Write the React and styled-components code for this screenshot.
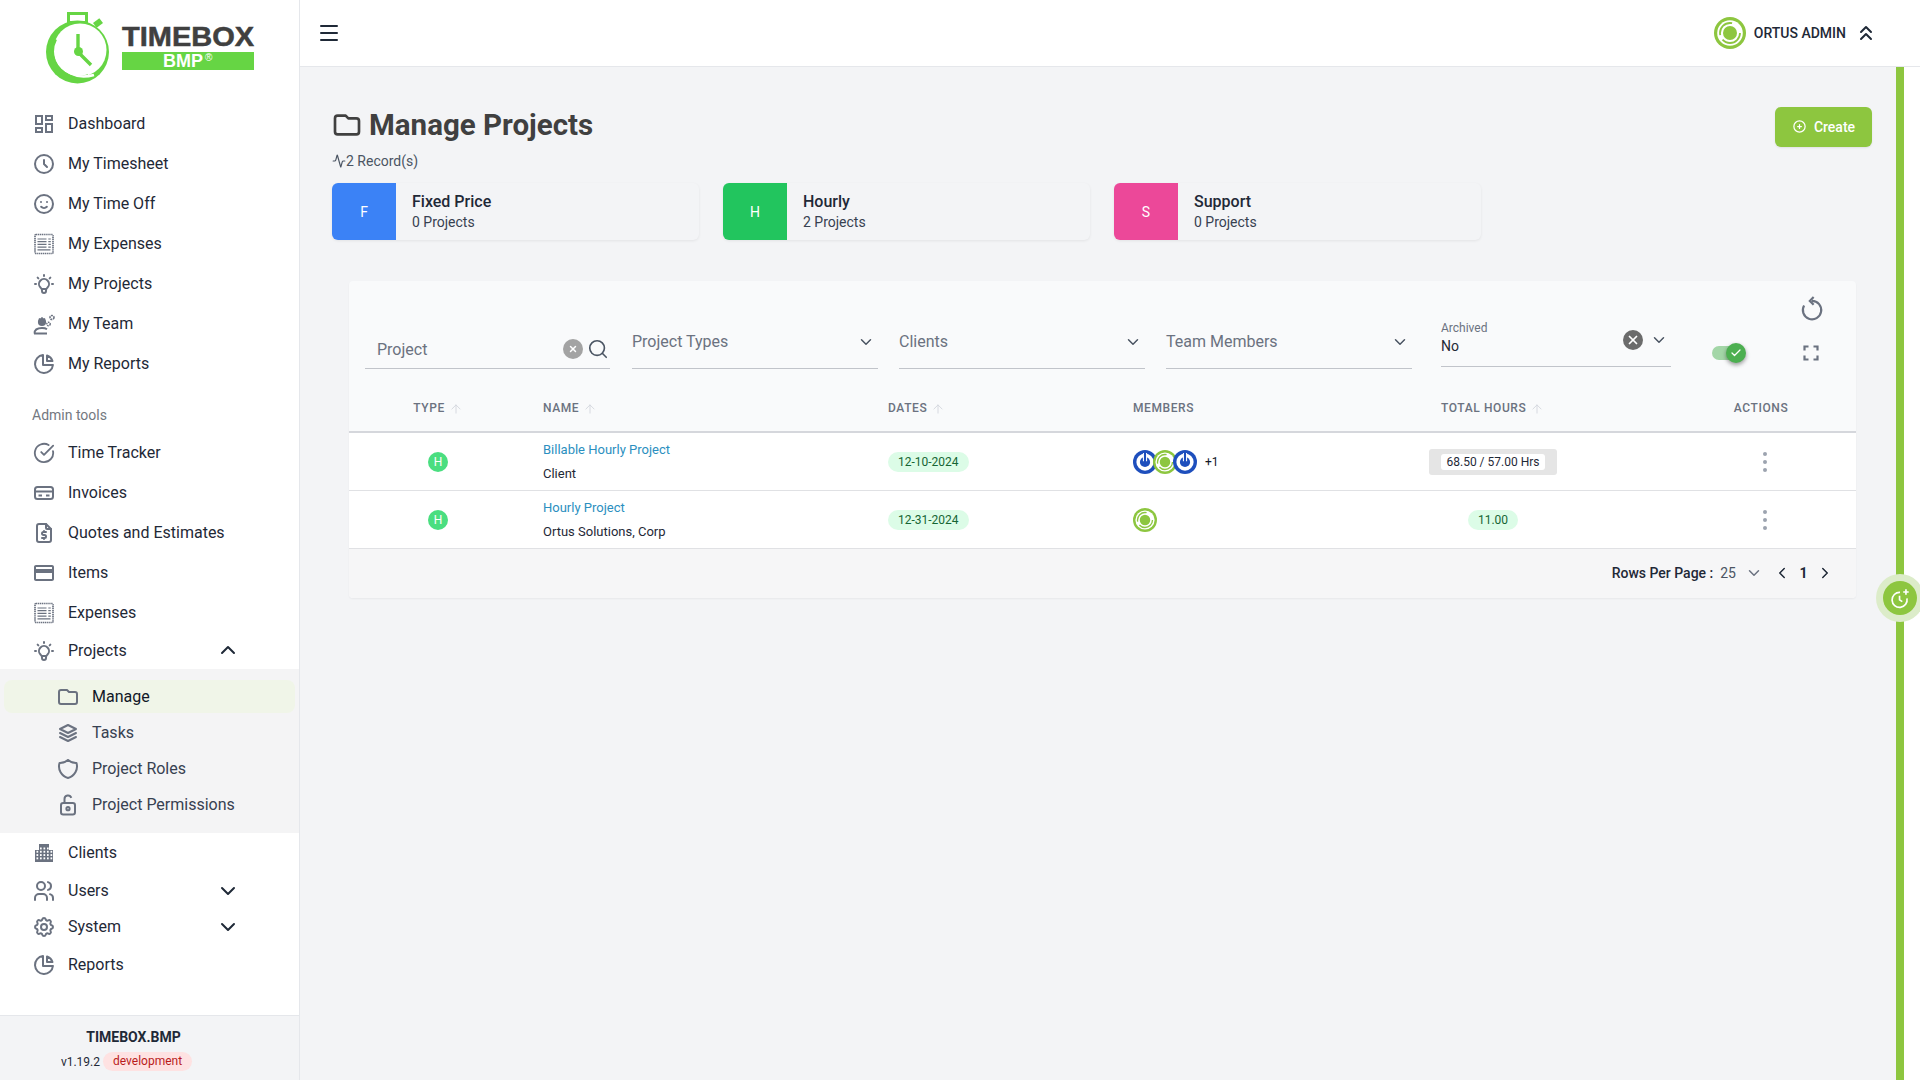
import React from 'react';
import styled, { createGlobalStyle } from 'styled-components';
import {
  Menu, ChevronUp, ChevronDown, ChevronsUp, ChevronLeft, ChevronRight, Activity,
  CircleCheckBig, ArrowUp, Search, X, Check,
} from 'lucide-react';
import {
  HiOutlineClock, HiOutlineEmojiHappy, HiOutlineLightBulb, HiOutlineChartPie,
  HiOutlineFolder, HiOutlinePlusCircle,
} from 'react-icons/hi';
import { MdOutlineDashboard, MdOutlineCreditCard } from 'react-icons/md';
import { TbFileDollar, TbStack2, TbShield, TbUsers, TbSettings } from 'react-icons/tb';

const GlobalStyle = createGlobalStyle`
  html, body { margin: 0; padding: 0; }
  body { font-family: Roboto, "Liberation Sans", sans-serif; background: #f3f4f6; color: #1f2937; }
  * { box-sizing: border-box; }
`;

const Page = styled.div`
  display: flex;
  width: 1920px;
  height: 1080px;
  overflow: hidden;
  position: relative;
`;

/* ---------- sidebar ---------- */
const Sidebar = styled.aside`
  width: 300px;
  flex: none;
  display: flex;
  flex-direction: column;
  background: #fff;
  border-right: 1px solid #e5e7eb;
`;
const LogoBox = styled.div`
  height: 104px;
  padding: 8px 0 0 40px;
  flex: none;
`;
const NavRow = styled.div`
  height: ${(p) => p.$h || 40}px;
  flex: none;
  display: flex;
  align-items: center;
  gap: 12px;
  padding: 0 59px 0 32px;
  font-size: 16px;
  color: #1f2937;
`;
const NavIcon = styled.span`
  width: 24px;
  height: 24px;
  flex: none;
  display: flex;
  align-items: center;
  justify-content: center;
  color: #6b7280;
`;
const NavLabel = styled.span`
  flex: 1;
  line-height: 20px;
`;
const OpenChevron = styled(ChevronUp)`
  margin-top: -3px;
`;
const SectionLabel = styled.div`
  height: 49px;
  flex: none;
  padding: 21px 0 0 32px;
  font-size: 14px;
  line-height: 20px;
  color: #737880;
`;
const SubMenu = styled.div`
  flex: none;
  height: 164px;
  padding: 11px 4px 0 4px;
  background: #f4f4f5;
  display: flex;
  flex-direction: column;
  gap: 3px;
`;
const SubRow = styled.div`
  height: 33px;
  flex: none;
  display: flex;
  align-items: center;
  gap: 12px;
  padding-left: 52px;
  border-radius: 8px;
  font-size: 16px;
  background: ${(p) => (p.$active ? '#f0f5e8' : 'transparent')};
  color: ${(p) => (p.$active ? '#111827' : '#374151')};
`;
const Spacer = styled.div`
  flex: 1;
`;
const SideFooter = styled.div`
  flex: none;
  height: 65px;
  background: #f3f4f6;
  border-top: 1px solid #e5e7eb;
  padding: 12px 32px 0 0;
  display: flex;
  flex-direction: column;
  align-items: center;
  gap: 6px;
`;
const AppName = styled.div`
  font-size: 14px;
  line-height: 18px;
  font-weight: 700;
  color: #1f2937;
`;
const VersionLine = styled.div`
  display: flex;
  align-items: center;
  gap: 3px;
  margin-right: 14px;
  font-size: 12px;
  color: #1f2937;
`;
const EnvBadge = styled.span`
  background: #fee2e2;
  color: #b91c1c;
  border-radius: 10px;
  padding: 0 10px;
  line-height: 19px;
  font-size: 12px;
`;

/* ---------- main ---------- */
const Main = styled.div`
  flex: 1;
  min-width: 0;
  display: flex;
  flex-direction: column;
`;
const TopBar = styled.header`
  height: 67px;
  flex: none;
  background: #fff;
  border-bottom: 1px solid #e5e7eb;
  display: flex;
  align-items: center;
  justify-content: space-between;
  padding: 0 42px 0 17px;
  color: #1f2937;
`;
const UserBox = styled.div`
  display: flex;
  align-items: center;
  font-size: 14px;
  font-weight: 500;
  color: #1f2937;
  gap: 8px;
`;
const UserChevron = styled.span`
  display: flex;
`;
const Below = styled.div`
  flex: 1;
  display: flex;
  min-height: 0;
`;
const Content = styled.main`
  flex: 1;
  min-width: 0;
  padding: 40px 24px 0 32px;
`;
const Rail = styled.div`
  width: 24px;
  flex: none;
  background: #fff;
  border-left: 8px solid #8dc63f;
`;
const FloatingRing = styled.div`
  position: absolute;
  left: 1876px;
  top: 574px;
  width: 48px;
  height: 48px;
  border-radius: 50%;
  background: #dcecc9;
  display: flex;
  align-items: center;
  justify-content: center;
`;
const FloatingButton = styled.div`
  width: 34px;
  height: 34px;
  border-radius: 50%;
  background: #8dc63f;
  color: #fff;
  display: flex;
  align-items: center;
  justify-content: center;
`;
const TitleRow = styled.div`
  display: flex;
  justify-content: space-between;
  align-items: flex-start;
`;
const TitleBlock = styled.div`
  display: flex;
  flex-direction: column;
`;
const Title = styled.h1`
  margin: 0 0 0 -1px;
  display: flex;
  align-items: center;
  gap: 6px;
  height: 36px;
  font-size: 29.5px;
  line-height: 36px;
  font-weight: 700;
  color: #404040;
`;
const Records = styled.div`
  margin-top: 8px;
  display: flex;
  align-items: center;
  font-size: 14px;
  line-height: 20px;
  color: #4b5563;
`;
const CreateButton = styled.button`
  width: 97px;
  height: 40px;
  border: 0;
  border-radius: 6px;
  background: #8dc63f;
  color: #fff;
  font-family: inherit;
  font-size: 14px;
  font-weight: 500;
  display: flex;
  align-items: center;
  justify-content: center;
  gap: 7px;
  padding: 0;
  box-shadow: 0 1px 2px rgba(0, 0, 0, 0.08);
  svg { margin-top: -2px; }
`;
const TypeCards = styled.div`
  margin-top: 12px;
  display: flex;
  gap: 24px;
`;
const TypeCard = styled.div`
  width: 367px;
  height: 57px;
  display: flex;
  align-items: center;
  border-radius: 6px;
  overflow: hidden;
  background: #f3f4f6;
  box-shadow: 0 1px 3px rgba(0, 0, 0, 0.07);
`;
const TypeLetter = styled.div`
  width: 64px;
  height: 100%;
  flex: none;
  background: ${(p) => p.$bg};
  color: #fff;
  font-size: 14px;
  font-weight: 400;
  display: flex;
  align-items: center;
  justify-content: center;
`;
const TypeText = styled.div`
  padding-left: 16px;
`;
const TypeName = styled.div`
  font-size: 16px;
  line-height: 20px;
  font-weight: 500;
  color: #1f2937;
`;
const TypeCount = styled.div`
  font-size: 14px;
  line-height: 20px;
  color: #374151;
`;

/* ---------- table card ---------- */
const TableCard = styled.section`
  margin: 41px 16px 0 17px;
  height: 317px;
  background: #f9fafb;
  border-radius: 4px;
  box-shadow: 0 1px 2px rgba(0, 0, 0, 0.05);
  overflow: hidden;
  display: flex;
  flex-direction: column;
`;
const Toolbar = styled.div`
  height: 88px;
  flex: none;
  display: flex;
  align-items: flex-end;
  padding-left: 16px;
`;
const Field = styled.div`
  width: ${(p) => p.$w}px;
  margin-right: ${(p) => p.$gap}px;
  height: 52px;
  flex: none;
  display: flex;
  align-items: flex-end;
  padding: 0 ${(p) => p.$pr || 3}px ${(p) => p.$pb || 17}px ${(p) => p.$pl || 0}px;
  border-bottom: 1.5px solid #c1c4ca;
  color: #6b7280;
  font-size: 16px;
  line-height: 19px;
  transform: ${(p) => (p.$lift ? `translateY(-${p.$lift}px)` : 'none')};
`;
const FieldText = styled.span`
  flex: 1;
`;
const ClearDot = styled.span`
  width: 20px;
  height: 20px;
  border-radius: 50%;
  background: ${(p) => p.$bg};
  color: #fff;
  flex: none;
  display: flex;
  align-items: center;
  justify-content: center;
`;
const SearchGlyph = styled.span`
  display: flex;
  margin-left: 4px;
  margin-bottom: -1px;
  color: #4b5563;
`;
const ArchivedValue = styled.div`
  flex: 1;
  display: flex;
  flex-direction: column;
`;
const ArchivedLabel = styled.span`
  font-size: 12px;
  line-height: 15px;
  color: #6b7280;
`;
const ArchivedText = styled.span`
  font-size: 14px;
  line-height: 20px;
  color: #1f2937;
`;
const ArchivedControls = styled.div`
  display: flex;
  align-items: center;
  gap: 7px;
  align-self: flex-start;
  padding-top: 15px;
  color: #4b5563;
`;
const ToggleTrack = styled.div`
  position: relative;
  width: 30px;
  height: 14px;
  flex: none;
  border-radius: 7px;
  background: #a3d6a7;
  margin-bottom: 9px;
`;
const ToggleThumb = styled.span`
  position: absolute;
  left: 14px;
  top: -3px;
  width: 20px;
  height: 20px;
  border-radius: 50%;
  background: #4caf50;
  color: #fff;
  display: flex;
  align-items: center;
  justify-content: center;
  box-shadow: 0 2px 4px rgba(0, 0, 0, 0.4);
`;
const ToolColumn = styled.div`
  margin-left: 57px;
  display: flex;
  flex-direction: column;
  align-items: center;
  gap: 21px;
  padding-bottom: 6px;
  color: #6b7280;
`;
const ExpandBox = styled.span`
  display: flex;
  margin-right: 3px;
`;
const TableRow = styled.div`
  display: grid;
  grid-template-columns: 194px 345px 245px 296px 128px 299px;
  align-items: center;
  flex: none;
  height: ${(p) => p.$h}px;
  padding-top: ${(p) => p.$pt || 0}px;
  background: ${(p) => p.$bg || '#fff'};
  border-bottom: ${(p) => p.$bw || 1}px solid ${(p) => p.$bc || '#e0e1e4'};
`;
const HeadCell = styled.div`
  display: flex;
  align-items: center;
  justify-content: ${(p) => (p.$center ? 'center' : 'flex-start')};
  gap: 4px;
  padding: ${(p) => p.$pad || 0};
  font-size: 12px;
  font-weight: 500;
  letter-spacing: 0.05em;
  color: #6b7280;
  white-space: nowrap;
  svg { color: #d1d5db; margin-top: 2px; }
`;
const TypeCell = styled.div`
  display: flex;
  justify-content: center;
  padding-right: 16px;
`;
const TypeDot = styled.span`
  width: 20px;
  height: 20px;
  border-radius: 50%;
  background: #4ade80;
  color: #fff;
  font-size: 12px;
  font-weight: 400;
  display: flex;
  align-items: center;
  justify-content: center;
`;
const NameCell = styled.div`
  display: flex;
  flex-direction: column;
  gap: 4px;
`;
const ProjectLink = styled.a`
  font-size: 13px;
  line-height: 20px;
  color: #2b8fc0;
`;
const ClientName = styled.span`
  font-size: 13px;
  line-height: 20px;
  color: #1f2937;
`;
const Pill = styled.span`
  align-self: center;
  justify-self: ${(p) => (p.$center ? 'center' : 'start')};
  height: 20px;
  padding: 0 10px;
  border-radius: 10px;
  background: #dcfce7;
  color: #166534;
  font-size: 12px;
  line-height: 20px;
`;
const Members = styled.div`
  display: flex;
  align-items: center;
  svg + svg { margin-left: -4px; }
`;
const MoreCount = styled.span`
  margin-left: 8px;
  font-size: 12px;
  color: #111827;
`;
const HoursBox = styled.div`
  height: 26px;
  border-radius: 3px;
  background: #e5e5e5;
  display: flex;
  align-items: center;
  justify-content: center;
`;
const HoursText = styled.span`
  height: 16px;
  padding: 0 6px;
  border-radius: 3px;
  background: #fff;
  font-size: 12px;
  line-height: 16px;
  color: #1f2937;
  white-space: nowrap;
`;
const ActionCell = styled.div`
  display: flex;
  justify-content: center;
  padding: 0 26px 0 143px;
`;
const Kebab = styled.span`
  display: flex;
  flex-direction: column;
  gap: 4px;
`;
const KebabDot = styled.i`
  width: 4px;
  height: 4px;
  border-radius: 50%;
  background: #9ca3af;
`;
const Pager = styled.div`
  flex: 1;
  background: #f6f6f7;
  display: flex;
  align-items: center;
  justify-content: flex-end;
  padding: 0 22px 1px 0;
  color: #1f2937;
`;
const PagerLabel = styled.span`
  font-size: 14px;
  font-weight: 500;
  color: #1f2937;
`;
const PagerSize = styled.span`
  margin-left: 7px;
  font-size: 14px;
  color: #4b5563;
`;
const PagerCurrent = styled.span`
  width: 25px;
  text-align: center;
  font-size: 14px;
  font-weight: 700;
`;
const PagerIcon = styled.span`
  display: flex;
  margin-left: ${(p) => p.$ml || 0}px;
  color: ${(p) => p.$color || '#1f2937'};
`;

/* ---------- drawings ---------- */
const Logo = () => (
  <svg width="220" height="80" viewBox="40 8 220 80" aria-label="Timebox BMP">
    <rect x="68.5" y="13.5" width="18" height="9" fill="none" stroke="#66d544" strokeWidth="3" />
    <rect x="74" y="22" width="7" height="4" fill="#66d544" />
    <rect x="94" y="20" width="8" height="6" fill="#66d544" transform="rotate(-38 98 23)" />
    <circle cx="77.5" cy="52" r="31.5" fill="#66d544" />
    <circle cx="80" cy="50" r="26.5" fill="#fff" />
    <circle cx="78.5" cy="51.5" r="25.5" fill="none" stroke="#66d544" strokeWidth="2" strokeDasharray="62 99" strokeDashoffset="-30" />
    <path d="M58 57C62 72 76 80 94 75" fill="none" stroke="#fff" strokeWidth="2.4" />
    <path d="M78 34V52L91 65" fill="none" stroke="#66d544" strokeWidth="3.4" />
    <circle cx="78.5" cy="51.5" r="4.5" fill="#66d544" />
    <text x="122" y="45.5" fontFamily="'Liberation Sans', sans-serif" fontWeight="700" fontSize="27" textLength="132" lengthAdjust="spacingAndGlyphs" fill="#404040" stroke="#404040" strokeWidth=".5">TIMEBOX</text>
    <rect x="122" y="52" width="132" height="18" fill="#66d544" />
    <text x="163" y="67" fontFamily="'Liberation Sans', sans-serif" fontWeight="700" fontSize="18" fill="#fff">BMP</text>
    <text x="205" y="60.5" fontFamily="'Liberation Sans', sans-serif" fontSize="10" fill="#fff">®</text>
  </svg>
);

const ReceiptIcon = () => (
  <svg width="24" height="24" viewBox="0 0 24 24" fill="none" stroke="currentColor">
    <rect x="3" y="2.5" width="18" height="19" rx="1" strokeWidth="1.7" strokeDasharray="1.3 .6" />
    <path d="M5.5 7h9M5.5 9.7h9M5.5 12.4h9M5.5 15.1h9M5.5 17.8h13M16.3 7h2.5M16.3 9.7h2.5M16.3 12.4h2.5M16.3 15.1h2.5" strokeWidth="1.2" />
  </svg>
);
const TeamIcon = () => (
  <svg width="24" height="24" viewBox="0 0 24 24" fill="none" stroke="currentColor" strokeWidth="1.8">
    <circle cx="10" cy="10" r="3.2" fill="currentColor" />
    <path d="M10 5v1.5M7 6.5l.8 1M13 6.5l-.8 1" strokeWidth="1.3" />
    <path d="M2.5 21.5c0-4 3.5-5.5 7.5-5.5 2.2 0 3.8.4 5 1.3M2 21.5h13" />
    <circle cx="20" cy="5.5" r="2" strokeWidth="1.6" strokeDasharray="1.8 .7" />
    <circle cx="16.5" cy="12" r="1.7" strokeWidth="1.5" strokeDasharray="1.5 .7" />
  </svg>
);
const InvoiceIcon = () => (
  <svg width="24" height="24" viewBox="0 0 24 24" fill="none" stroke="currentColor" strokeWidth="2">
    <rect x="3" y="6" width="18" height="12" rx="2.5" />
    <path d="M3 10.5h18" />
    <path d="M6.5 14.5h3.5M14 14.5h3.5" />
  </svg>
);
const BuildingIcon = () => {
  const cells = [];
  [6.5, 9.8, 13.1, 16.4].forEach((y, r) => {
    [4.5, 8, 11.5, 15, 18.5].forEach((x) => {
      if (r > 0 || (x > 6 && x < 17)) cells.push(<rect key={`${x}-${y}`} x={x} y={y} width="1.7" height="1.9" fill="#fff" />);
    });
  });
  return (
    <svg width="24" height="24" viewBox="0 0 24 24" fill="currentColor">
      <path d="M7 3h10v6h4v12H3V9h4z" />
      {cells}
    </svg>
  );
};
const LockIcon = () => (
  <svg width="24" height="24" viewBox="0 0 24 24" fill="none" stroke="currentColor" strokeWidth="2">
    <rect x="5" y="10" width="14" height="11.5" rx="2.2" />
    <circle cx="12" cy="15.7" r="1.6" />
    <path d="M8.5 10V6a3.5 3.5 0 0 1 6.8-1.2" />
  </svg>
);
const RefreshIcon = () => (
  <svg width="26" height="26" viewBox="0 0 24 24" fill="none" stroke="currentColor" strokeWidth="2">
    <path d="M12 4.5a8.5 8.5 0 1 1-7.3 4.2" />
    <path d="M13.5 1L10 4.5 13.5 8" />
  </svg>
);
const ExpandIcon = () => (
  <svg width="20" height="20" viewBox="0 0 20 20" fill="none" stroke="currentColor" strokeWidth="2.2">
    <path d="M3.5 7.5v-4h4M12.5 3.5h4v4M16.5 12.5v4h-4M7.5 16.5h-4v-4" />
  </svg>
);
const TimerPlusIcon = () => (
  <svg width="22" height="22" viewBox="0 0 24 24" fill="none" stroke="currentColor" strokeWidth="1.8">
    <path d="M19.6 12.5a8.2 8.2 0 1 1-7.6-6.6" />
    <path d="M11.5 9.5v4.5l3 2" />
    <path d="M18.5 2.5v6M15.5 5.5h6" />
  </svg>
);
const GreenAvatar = ({ size }) => (
  <svg width={size} height={size} viewBox="0 0 32 32">
    <circle cx="16" cy="16" r="16" fill="#8dc63f" />
    <circle cx="16" cy="16" r="12.8" fill="#fff" />
    <circle cx="16" cy="16" r="10" fill="none" stroke="#8dc63f" strokeWidth="1.8" strokeDasharray="24 5 20 14" />
    <circle cx="16" cy="16" r="7" fill="#8dc63f" />
  </svg>
);
const BlueAvatar = ({ size }) => (
  <svg width={size} height={size} viewBox="0 0 32 32">
    <circle cx="16" cy="16" r="16" fill="#1e4fbd" />
    <circle cx="16" cy="16" r="11.5" fill="#fff" />
    <circle cx="16" cy="16" r="6.8" fill="#1e4fbd" />
    <rect x="13.2" y="4" width="5.6" height="11" fill="#fff" />
    <rect x="14.6" y="4" width="2.8" height="12" fill="#1e4fbd" />
  </svg>
);

const SortUp = () => <ArrowUp size={14} strokeWidth={1.5} />;

const topItems = [
  ['Dashboard', <MdOutlineDashboard size={24} />],
  ['My Timesheet', <HiOutlineClock size={24} />],
  ['My Time Off', <HiOutlineEmojiHappy size={24} />],
  ['My Expenses', <ReceiptIcon />],
  ['My Projects', <HiOutlineLightBulb size={24} />],
  ['My Team', <TeamIcon />],
  ['My Reports', <HiOutlineChartPie size={24} />],
];
const adminItems = [
  ['Time Tracker', <CircleCheckBig size={22} />],
  ['Invoices', <InvoiceIcon />],
  ['Quotes and Estimates', <TbFileDollar size={24} />],
  ['Items', <MdOutlineCreditCard size={24} />],
  ['Expenses', <ReceiptIcon />],
];
const subItems = [
  ['Manage', <HiOutlineFolder size={24} />, true],
  ['Tasks', <TbStack2 size={24} />],
  ['Project Roles', <TbShield size={24} />],
  ['Project Permissions', <LockIcon />],
];

export default function App() {
  return (
    <>
      <GlobalStyle />
      <Page>
        <Sidebar>
          <LogoBox><Logo /></LogoBox>
          {topItems.map(([label, icon]) => (
            <NavRow key={label}><NavIcon>{icon}</NavIcon><NavLabel>{label}</NavLabel></NavRow>
          ))}
          <SectionLabel>Admin tools</SectionLabel>
          {adminItems.map(([label, icon]) => (
            <NavRow key={label}><NavIcon>{icon}</NavIcon><NavLabel>{label}</NavLabel></NavRow>
          ))}
          <NavRow $h={36}>
            <NavIcon><HiOutlineLightBulb size={24} /></NavIcon>
            <NavLabel>Projects</NavLabel>
            <OpenChevron size={24} />
          </NavRow>
          <SubMenu>
            {subItems.map(([label, icon, active]) => (
              <SubRow key={label} $active={active}><NavIcon>{icon}</NavIcon>{label}</SubRow>
            ))}
          </SubMenu>
          <NavRow><NavIcon><BuildingIcon /></NavIcon><NavLabel>Clients</NavLabel></NavRow>
          <NavRow $h={36}><NavIcon><TbUsers size={24} /></NavIcon><NavLabel>Users</NavLabel><ChevronDown size={24} /></NavRow>
          <NavRow $h={36}><NavIcon><TbSettings size={24} /></NavIcon><NavLabel>System</NavLabel><ChevronDown size={24} /></NavRow>
          <NavRow><NavIcon><HiOutlineChartPie size={24} /></NavIcon><NavLabel>Reports</NavLabel></NavRow>
          <Spacer />
          <SideFooter>
            <AppName>TIMEBOX.BMP</AppName>
            <VersionLine>v1.19.2<EnvBadge>development</EnvBadge></VersionLine>
          </SideFooter>
        </Sidebar>
        <Main>
          <TopBar>
            <Menu size={24} />
            <UserBox>
              <GreenAvatar size={32} />
              ORTUS ADMIN
              <UserChevron><ChevronsUp size={24} /></UserChevron>
            </UserBox>
          </TopBar>
          <Below>
            <Content>
              <TitleRow>
                <TitleBlock>
                  <Title><HiOutlineFolder size={32} />Manage Projects</Title>
                  <Records><Activity size={14} />2 Record(s)</Records>
                </TitleBlock>
                <CreateButton><HiOutlinePlusCircle size={15} />Create</CreateButton>
              </TitleRow>
              <TypeCards>
                <TypeCard>
                  <TypeLetter $bg="#3b82f6">F</TypeLetter>
                  <TypeText><TypeName>Fixed Price</TypeName><TypeCount>0 Projects</TypeCount></TypeText>
                </TypeCard>
                <TypeCard>
                  <TypeLetter $bg="#22c55e">H</TypeLetter>
                  <TypeText><TypeName>Hourly</TypeName><TypeCount>2 Projects</TypeCount></TypeText>
                </TypeCard>
                <TypeCard>
                  <TypeLetter $bg="#ec4899">S</TypeLetter>
                  <TypeText><TypeName>Support</TypeName><TypeCount>0 Projects</TypeCount></TypeText>
                </TypeCard>
              </TypeCards>
              <TableCard>
                <Toolbar>
                  <Field $w={245} $gap={22} $pb={9} $pl={12} $pr={1}>
                    <FieldText>Project</FieldText>
                    <ClearDot $bg="#a3a3a3"><X size={10} strokeWidth={3.5} /></ClearDot>
                    <SearchGlyph><Search size={22} strokeWidth={1.8} /></SearchGlyph>
                  </Field>
                  <Field $w={246} $gap={21}><FieldText>Project Types</FieldText><ChevronDown size={18} color="#4b5563" /></Field>
                  <Field $w={246} $gap={21}><FieldText>Clients</FieldText><ChevronDown size={18} color="#4b5563" /></Field>
                  <Field $w={246} $gap={29}><FieldText>Team Members</FieldText><ChevronDown size={18} color="#4b5563" /></Field>
                  <Field $w={230} $gap={41} $pb={10} $pr={3} $lift={2}>
                    <ArchivedValue>
                      <ArchivedLabel>Archived</ArchivedLabel>
                      <ArchivedText>No</ArchivedText>
                    </ArchivedValue>
                    <ArchivedControls>
                      <ClearDot $bg="#6b6b6b"><X size={14} strokeWidth={3} /></ClearDot>
                      <ChevronDown size={18} />
                    </ArchivedControls>
                  </Field>
                  <ToggleTrack>
                    <ToggleThumb><Check size={12} strokeWidth={2.5} /></ToggleThumb>
                  </ToggleTrack>
                  <ToolColumn>
                    <RefreshIcon />
                    <ExpandBox><ExpandIcon /></ExpandBox>
                  </ToolColumn>
                </Toolbar>
                <TableRow $h={64} $pt={16} $bg="#f9fafb" $bw={2} $bc="#d5d7dc">
                  <HeadCell $center $pad="0 16px 0 0">TYPE <SortUp /></HeadCell>
                  <HeadCell>NAME <SortUp /></HeadCell>
                  <HeadCell>DATES <SortUp /></HeadCell>
                  <HeadCell>MEMBERS</HeadCell>
                  <HeadCell $pad="0 0 0 12px">TOTAL HOURS <SortUp /></HeadCell>
                  <HeadCell $center $pad="0 34px 0 143px">ACTIONS</HeadCell>
                </TableRow>
                <TableRow $h={58}>
                  <TypeCell><TypeDot>H</TypeDot></TypeCell>
                  <NameCell><ProjectLink>Billable Hourly Project</ProjectLink><ClientName>Client</ClientName></NameCell>
                  <Pill>12-10-2024</Pill>
                  <Members>
                    <BlueAvatar size={24} /><GreenAvatar size={24} /><BlueAvatar size={24} />
                    <MoreCount>+1</MoreCount>
                  </Members>
                  <HoursBox><HoursText>68.50 / 57.00 Hrs</HoursText></HoursBox>
                  <ActionCell><Kebab><KebabDot /><KebabDot /><KebabDot /></Kebab></ActionCell>
                </TableRow>
                <TableRow $h={58}>
                  <TypeCell><TypeDot>H</TypeDot></TypeCell>
                  <NameCell><ProjectLink>Hourly Project</ProjectLink><ClientName>Ortus Solutions, Corp</ClientName></NameCell>
                  <Pill>12-31-2024</Pill>
                  <Members><GreenAvatar size={24} /></Members>
                  <Pill $center>11.00</Pill>
                  <ActionCell><Kebab><KebabDot /><KebabDot /><KebabDot /></Kebab></ActionCell>
                </TableRow>
                <Pager>
                  <PagerLabel>Rows Per Page :</PagerLabel>
                  <PagerSize>25</PagerSize>
                  <PagerIcon $ml={9} $color="#6b7280"><ChevronDown size={18} /></PagerIcon>
                  <PagerIcon $ml={10}><ChevronLeft size={18} /></PagerIcon>
                  <PagerCurrent>1</PagerCurrent>
                  <PagerIcon><ChevronRight size={18} /></PagerIcon>
                </Pager>
              </TableCard>
            </Content>
            <Rail />
          </Below>
        </Main>
        <FloatingRing>
          <FloatingButton><TimerPlusIcon /></FloatingButton>
        </FloatingRing>
      </Page>
    </>
  );
}
